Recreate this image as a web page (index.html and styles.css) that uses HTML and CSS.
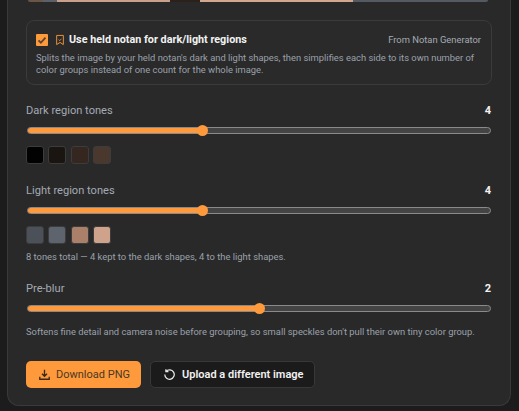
FILE: index.html
```html
<!DOCTYPE html>
<html lang="en">
<head>
<meta charset="utf-8">
<title>Held notan regions</title>
<link rel="stylesheet" href="styles.css">
</head>
<body>
<main class="card">
  <div class="preview"><div class="strip"><i class="s1"></i><i class="s2"></i><i class="s3"></i><i class="s4"></i><i class="s5"></i><i class="s6"></i></div></div>
  <section class="notan">
    <div class="notan-head">
      <span class="check"><svg viewBox="0 0 12 12" width="12" height="12"><path d="M2.5 6.3l2.4 2.4 4.6-5" fill="none" stroke="#5a4630" stroke-width="1.8"/></svg></span>
      <svg class="mark" viewBox="0 0 12 14" width="10" height="12"><path d="M2 1.5h8v11l-4-2.6-4 2.6z" fill="none" stroke="#e8913c" stroke-width="1.2"/><path d="M4.3 6.5l1.4 1.3 2-2.3" fill="none" stroke="#e8913c" stroke-width="1"/></svg>
      <strong>Use held notan for dark/light regions</strong>
      <span class="source">From Notan Generator</span>
    </div>
    <p>Splits the image by your held notan's dark and light shapes, then simplifies each side to its own number of color groups instead of one count for the whole image.</p>
  </section>
  <div class="field">
    <div class="label"><span>Dark region tones</span><b>4</b></div>
    <div class="slider"><div class="fill f-tones"></div><div class="thumb"></div></div>
    <div class="swatches"><i class="d1"></i><i class="d2"></i><i class="d3"></i><i class="d4"></i></div>
  </div>
  <div class="field light">
    <div class="label"><span>Light region tones</span><b>4</b></div>
    <div class="slider"><div class="fill f-tones"></div><div class="thumb"></div></div>
    <div class="swatches"><i class="l1"></i><i class="l2"></i><i class="l3"></i><i class="l4"></i></div>
    <p class="note">8 tones total — 4 kept to the dark shapes, 4 to the light shapes.</p>
  </div>
  <div class="field blur">
    <div class="label"><span>Pre-blur</span><b>2</b></div>
    <div class="slider"><div class="fill f-blur"></div><div class="thumb"></div></div>
    <p class="note">Softens fine detail and camera noise before grouping, so small speckles don't pull their own tiny color group.</p>
  </div>
  <div class="actions">
    <button class="btn primary"><svg viewBox="1 1 14 14" width="11" height="11"><path d="M8 2v8M4.8 7L8 10.2 11.2 7M2 11v3h12v-3" fill="none" stroke="#3a2a18" stroke-width="1.7"/></svg>Download PNG</button>
    <button class="btn ghost"><svg viewBox="1 1 14 14" width="11" height="11"><path d="M3.6 4A6 6 0 1 1 2 8M3.4 1.4v3h3.2" fill="none" stroke="#e8e8e8" stroke-width="1.6"/></svg>Upload a different image</button>
  </div>
</main>
</body>
</html>
```
FILE: styles.css
```css
* { box-sizing: border-box; }
html, body { margin: 0; height: 411px; overflow: hidden; background: #1c1c1c; }
body { padding: 0 8px 5px 7px; font-family: "Roboto", "Liberation Sans", sans-serif; color: #e8e8e8; }
.card { height: 406px; background: #292929; border: 1px solid #3a3a3a; border-top: 0; border-radius: 0 0 12px 12px; padding: 0 18px; }
.preview { height: 20px; }
.strip { display: flex; height: 2px; margin-left: 2px; width: 460px; border-radius: 0 0 3px 3px; overflow: hidden; }
.strip i { display: block; }
.s1 { width: 15px; background: #6b5546; }
.s2 { width: 14px; background: #5c6068; }
.s3 { width: 113px; background: #c9a08a; }
.s4 { width: 30px; background: #2a211d; }
.s5 { width: 153px; background: #d3a78e; }
.s6 { flex: 1; background: #555a62; }
.notan { height: 65px; border: 1px solid #3b3b3b; border-radius: 8px; padding: 10px 10px 0 9px; background: #2a2a2a; }
.notan-head { display: flex; align-items: center; height: 17px; }
.check { width: 12px; height: 12px; background: #ff9a3c; border-radius: 1px; display: flex; flex: none; }
.mark { margin-left: 7px; flex: none; }
.notan-head strong { margin-left: 4px; font-size: 10.8px; font-weight: 700; color: #f2f2f2; white-space: nowrap; }
.source { margin-left: auto; font-size: 9.4px; color: #a4aab4; white-space: nowrap; }
.notan p { margin: 4px 0 0; font-size: 9.4px; line-height: 12px; color: #9ba1ab; }
.field { margin-top: 18px; }
.field.light { margin-top: 19px; }
.field.blur { margin-top: 18px; }
.label { display: flex; justify-content: space-between; align-items: center; height: 14px; padding-right: 1px; font-size: 11.1px; color: #a4aab4; }
.label b { font-size: 11px; font-weight: 700; color: #f2f2f2; }
.slider { position: relative; height: 7px; margin: 10px 1px 0 1px; border: 1px solid #8a8a8a; border-radius: 4px; background: #444; }
.fill { position: absolute; left: 0; top: 0; bottom: 0; background: #ff9a3c; border-radius: 3px; }
.f-tones { width: 175px; }
.f-blur { width: 232px; }
.thumb { position: absolute; top: -3px; width: 11px; height: 11px; border-radius: 50%; background: #ff9a3c; }
.f-tones + .thumb { left: 169px; }
.f-blur + .thumb { left: 226px; }
.swatches { display: flex; gap: 4.4px; margin-top: 12px; }
.swatches i { width: 18px; height: 18px; border-radius: 3px; border: 1px solid #3c3c3c; display: block; }
.d1 { background: #020202; } .d2 { background: #1b1512; } .d3 { background: #35261f; } .d4 { background: #4a372d; }
.l1 { background: #4c5159; } .l2 { background: #5d646e; } .l3 { background: #ab806a; } .l4 { background: #cfa28c; }
.note { margin: 7px 0 0; font-size: 9.4px; line-height: 12px; color: #9ba1ab; white-space: nowrap; }
.blur .note { margin-top: 14px; }
.actions { display: flex; gap: 9px; margin-top: 23px; }
.btn { display: flex; align-items: center; height: 27px; border-radius: 5px; font: inherit; font-size: 11px; white-space: nowrap; padding: 0 0 0 13px; }
.btn svg { flex: none; }
.primary { width: 115px; gap: 6px; background: #ff9a3c; border: 0; color: #4a3822; font-weight: 400; }
.ghost { width: 165px; gap: 7px; background: #1b1b1b; border: 1px solid #383838; color: #f2f2f2; font-weight: 600; }
```
